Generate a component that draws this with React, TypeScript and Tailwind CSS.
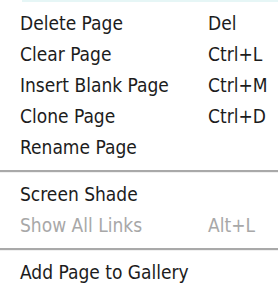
import React from "react";

type Item = { label: string; shortcut?: string; disabled?: boolean };

const groups: Item[][] = [
  [
    { label: "Delete Page", shortcut: "Del" },
    { label: "Clear Page", shortcut: "Ctrl+L" },
    { label: "Insert Blank Page", shortcut: "Ctrl+M" },
    { label: "Clone Page", shortcut: "Ctrl+D" },
    { label: "Rename Page" },
  ],
  [
    { label: "Screen Shade" },
    { label: "Show All Links", shortcut: "Alt+L", disabled: true },
  ],
  [{ label: "Add Page to Gallery" }],
];

const MenuRow: React.FC<{ item: Item }> = ({ item }) => (
  <div
    className={
      "flex h-[31px] items-center leading-[31px] " +
      (item.disabled ? "text-[#a8a8a8]" : "text-[#1c1c1c]")
    }
  >
    <span className="w-[208px] pl-[20px] whitespace-nowrap">{item.label}</span>
    {item.shortcut && <span className="whitespace-nowrap">{item.shortcut}</span>}
  </div>
);

const Separator: React.FC = () => (
  <div className="flex h-[16px] flex-col justify-center">
    <div className="h-[2px] bg-[#a9a9a9]" />
    <div className="h-[1px] bg-[#f0f0f0]" />
  </div>
);

const App: React.FC = () => {
  return (
    <div className="h-[289px] w-[278px] overflow-hidden bg-white font-['DejaVu_Sans_Condensed','DejaVu_Sans',sans-serif] text-[19px] [font-stretch:condensed]">
      <div className="ml-[22px] h-[2px] bg-[#e6f6f6]" />
      <div className="pt-[6px]">
        {groups.map((group, gi) => (
          <div key={gi}>
            {gi > 0 && <Separator />}
            {group.map((item) => (
              <MenuRow key={item.label} item={item} />
            ))}
          </div>
        ))}
      </div>
    </div>
  );
};

export default App;
